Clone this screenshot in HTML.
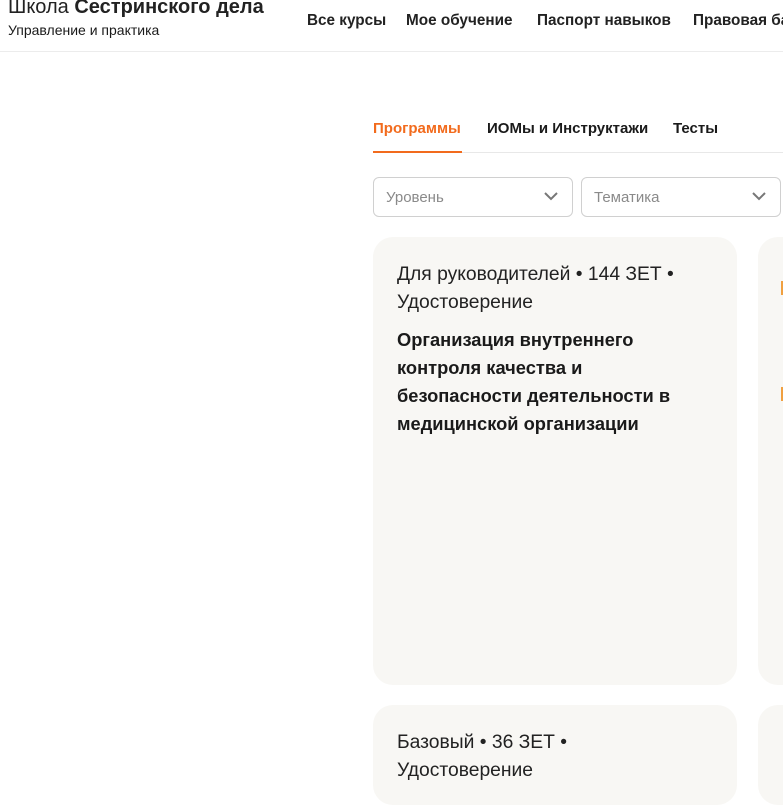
<!DOCTYPE html>
<html><head><meta charset="utf-8"><style>
*{margin:0;padding:0;box-sizing:border-box}
body{width:783px;height:783px;overflow:hidden;background:#fff;font-family:"Liberation Sans",sans-serif;color:#1a1a1a;position:relative}
.a{position:absolute;white-space:nowrap}
.card{position:absolute;background:#f8f7f4;border-radius:20px}
.sel{position:absolute;top:177px;height:40px;border:1px solid #d0d0d0;border-radius:6px;font-size:15px;color:#8a8a8a;padding:11px 12px}
.sel svg{position:absolute;right:14px;top:14px}
</style></head><body>
<div class="a" style="left:8px;top:-4px;font-size:20px;color:#222"><span style="font-weight:300">Школа</span> <b>Сестринского дела</b></div>
<div class="a" style="left:8px;top:22px;font-size:14px">Управление и практика</div>
<div class="a" style="left:307px;top:12px;font-size:15.3px;font-weight:bold;color:#222">Все курсы</div>
<div class="a" style="left:406px;top:12px;font-size:15.3px;font-weight:bold;color:#222">Мое обучение</div>
<div class="a" style="left:537px;top:12px;font-size:15.3px;font-weight:bold;color:#222">Паспорт навыков</div>
<div class="a" style="left:693px;top:12px;font-size:15.3px;font-weight:bold;color:#222">Правовая база</div>
<div class="a" style="left:0;top:51px;width:783px;height:1px;background:#ececec"></div>
<div class="a" style="left:373px;top:120px;font-size:15px;font-weight:bold;color:#f26b1d">Программы</div>
<div class="a" style="left:487px;top:120px;font-size:15px;font-weight:bold">ИОМы и Инструктажи</div>
<div class="a" style="left:673px;top:120px;font-size:15px;font-weight:bold">Тесты</div>
<div class="a" style="left:373px;top:152px;width:410px;height:1px;background:#e8e8e8"></div>
<div class="a" style="left:373px;top:151px;width:89px;height:2px;background:#f26b1d"></div>
<div class="sel" style="left:373px;width:200px">Уровень<svg width="14" height="9" viewBox="0 0 14 9"><path d="M1 1l6 6 6-6" fill="none" stroke="#777" stroke-width="2"/></svg></div>
<div class="sel" style="left:581px;width:200px">Тематика<svg width="14" height="9" viewBox="0 0 14 9"><path d="M1 1l6 6 6-6" fill="none" stroke="#777" stroke-width="2"/></svg></div>
<div class="card" style="left:373px;top:237px;width:364px;height:448px"></div>
<div class="card" style="left:758px;top:237px;width:60px;height:448px"></div>
<div class="card" style="left:373px;top:705px;width:364px;height:100px"></div>
<div class="card" style="left:758px;top:705px;width:60px;height:100px"></div>
<div class="a" style="left:781px;top:281px;width:3px;height:14px;background:#f0a040"></div>
<div class="a" style="left:781px;top:387px;width:3px;height:14px;background:#f0a040"></div>
<div class="a" style="left:397px;top:261px;font-size:19.3px;line-height:28px;color:#222">Для руководителей • 144 ЗЕТ •<br>Удостоверение</div>
<div class="a" style="left:397px;top:326px;font-size:18.3px;line-height:28px;font-weight:bold">Организация внутреннего<br>контроля качества и<br>безопасности деятельности в<br>медицинской организации</div>
<div class="a" style="left:397px;top:729px;font-size:19.3px;line-height:28px;color:#222">Базовый • 36 ЗЕТ •<br>Удостоверение</div>
</body></html>
